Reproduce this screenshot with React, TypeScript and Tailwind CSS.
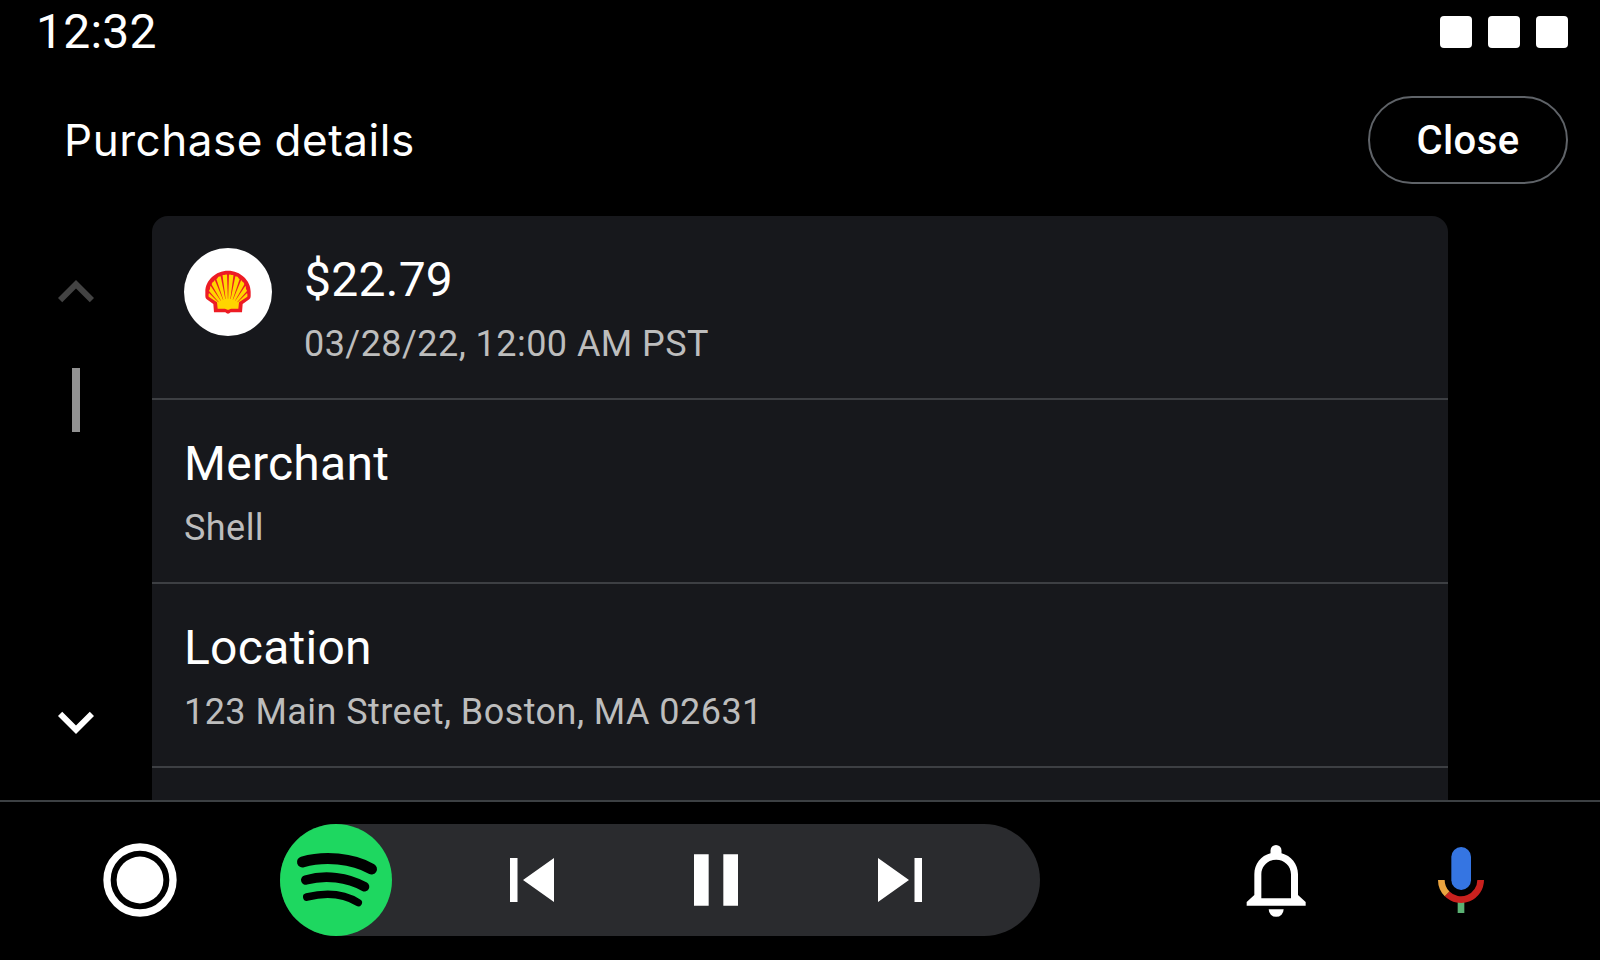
import type { ReactNode } from "react";

function ShellLogo() {
  return (
    <svg width="46" height="44" viewBox="0 0 138 132">
      <path
        fill="#ed1c24"
        d="M69 2C32 2 1 31 1 65v14q0 6 4 9L25 102l2 25h34q4 4 8 4t8-4h34l2-25 20-14q4-3 4-9V65C137 31 106 2 69 2Z"
      />
      <path
        fill="#ffd500"
        d="M69 15q6-3 11 0q7-1 11 4q8 0 11 7q7 1 9 8q7 3 8 11q5 5 4 12q5 6 3 11q2 6 1 12L102 97l-2 19H79q-4 0-5 2q-5 3-10 0q-1-2-5-2H38l-2-19L11 80q-1-6 1-12q-2-5 3-11q-1-7 4-12q1-8 8-11q2-7 9-8q3-7 11-7q4-5 11-4q5-3 11 0Z"
      />
      <g fill="#ed1c24">
        <path d="M66 12h6l-2.500 74h-1Z" />
        <path d="M46 14l6-2 10 75h-1Z" />
        <path d="M92 14l-6-2-10 75h1Z" />
        <path d="M27 24l5-3 23 68-1 .5Z" />
        <path d="M111 24l-5-3-23 68 1 .5Z" />
        <path d="M13 42l4-4 31 54-1 .5Z" />
        <path d="M125 42l-4-4-31 54 1 .5Z" />
        <path d="M5 62l2-5 34 39-1 .5Z" />
        <path d="M133 62l-2-5-34 39 1 .5Z" />
      </g>
    </svg>
  );
}

function SpotifyLogo() {
  return (
    <svg className="size-28" viewBox="0 0 24 24">
      <circle cx="12" cy="12" r="12" fill="#1ed760" />
      <g fill="none" stroke="#000" strokeLinecap="round">
        <path strokeWidth="2.36" d="M4.820 8.150C9.500 6.800 15.500 7.300 19.600 9.640" />
        <path strokeWidth="2.040" d="M5.520 12C9.700 10.800 14.500 11.400 18.120 13.450" />
        <path strokeWidth="1.620" d="M5.740 15.650C9.600 14.700 13.500 14.800 16.760 16.850" />
      </g>
    </svg>
  );
}

function PreviousIcon() {
  return (
    <svg className="size-11" viewBox="0 0 44 44" fill="#fff">
      <path d="M0 0h7.5v44H0zM44 0v44L13 22z" />
    </svg>
  );
}

function PauseIcon() {
  return (
    <svg className="h-[52px] w-11" viewBox="0 0 44 52" fill="#fff">
      <path d="M0 .33h14.67v51.34H0zM29.33 .33H44v51.34H29.33z" />
    </svg>
  );
}

function NextIcon() {
  return (
    <svg className="size-11" viewBox="0 0 44 44" fill="#fff">
      <path d="M36.5 0H44v44h-7.5zM0 0v44l31-22z" />
    </svg>
  );
}

function HomeIcon() {
  return (
    <svg className="size-20" viewBox="0 0 80 80">
      <circle cx="40" cy="40" r="33" fill="none" stroke="#fff" strokeWidth="7.33" />
      <circle cx="40" cy="40" r="23.4" fill="#fff" />
    </svg>
  );
}

function BellIcon() {
  return (
    <svg width="60" height="74" viewBox="78 72 180 222" fill="#fff">
      <path
        fillRule="evenodd"
        d="M151.500 91.500a16.500 16.500 0 0 1 33 0V100C213 107 234 132 234 163V225L257 246V257.500H80V246L103 225V163C103 132 123 107 151.500 100ZM124 235H213V163C213 138 193 119 168.500 119S124 138 124 163Z"
      />
      <path d="M146 268H191A22.500 22.500 0 0 1 146 268Z" />
    </svg>
  );
}

function MicIcon() {
  return (
    <svg width="46" height="66" viewBox="0 0 138 198">
      <rect x="40" y="0" width="59" height="129" rx="29.500" fill="#3575e2" />
      <path d="M59 160h20v38H59z" fill="#5bb173" />
      <path d="M128 99A59 59 0 0 1 27.300 140.700" fill="none" stroke="#c9211e" strokeWidth="20" />
      <path d="M10 99A59 59 0 0 0 27.300 140.700" fill="none" stroke="#eaa440" strokeWidth="20" />
    </svg>
  );
}

function Chevron({ up = false }: { up?: boolean }) {
  return (
    <svg className="size-[72px]" viewBox="0 0 24 24" fill={up ? "#434343" : "#fff"}>
      {up ? (
        <path d="M12 8l-6 6 1.410 1.410L12 10.830l4.590 4.580L18 14z" />
      ) : (
        <path d="M16.590 8.590L12 13.170 7.410 8.590 6 10l6 6 6-6z" />
      )}
    </svg>
  );
}

function Row({ title, detail, icon }: { title: string; detail: string; icon?: ReactNode }) {
  return (
    <div className="flex h-[184px] shrink-0 gap-8 border-b-2 border-[#3d3f43] px-8">
      {icon && (
        <div className="mt-8 flex size-[88px] items-center justify-center rounded-full bg-white">{icon}</div>
      )}
      <div className="flex flex-col gap-3.5 pt-9">
        <div className="text-[48px] leading-[56px] tracking-[0.26px] text-white">{title}</div>
        <div className="text-[36px] leading-[44px] tracking-[0.45px] text-[#bdbdbd]">{detail}</div>
      </div>
    </div>
  );
}

export default function App() {
  return (
    <div className="flex h-[960px] w-[1600px] flex-col overflow-hidden bg-black font-[Roboto,sans-serif] text-white">
      <div className="flex h-16 shrink-0 items-center justify-between pr-8 pl-9">
        <span className="text-[48px] leading-[56px] tracking-[0.24px]">12:32</span>
        <div className="flex gap-4">
          <div className="size-8 rounded-[4px] bg-white" />
          <div className="size-8 rounded-[4px] bg-white" />
          <div className="size-8 rounded-[4px] bg-white" />
        </div>
      </div>

      <div className="flex h-[152px] shrink-0 items-center justify-between pr-8 pl-16">
        <h1 className="font-[Inter,sans-serif] text-[44px] leading-[56px] tracking-[0.53px] [word-spacing:-1.3px]">
          Purchase details
        </h1>
        <button className="h-[88px] w-[200px] rounded-full border-2 border-[#5f6368] pt-0.5 text-[40px] leading-[48px] font-medium tracking-[0.4px]">
          Close
        </button>
      </div>

      <div className="flex h-[584px] shrink-0">
        <div className="flex w-[152px] flex-col items-center pt-10 pb-[42px]">
          <Chevron up />
          <div className="mt-10 h-16 w-2 bg-[#929292]" />
          <div className="mt-auto">
            <Chevron />
          </div>
        </div>
        <div className="flex w-[1296px] flex-col overflow-hidden rounded-t-2xl bg-[#17181c]">
          <Row title="$22.79" detail="03/28/22, 12:00 AM PST" icon={<ShellLogo />} />
          <Row title="Merchant" detail="Shell" />
          <Row title="Location" detail="123 Main Street, Boston, MA 02631" />
        </div>
      </div>

      <div className="flex h-40 shrink-0 items-center border-t-2 border-[#3c4043] pb-0.5 pl-[100px]">
        <HomeIcon />
        <div className="ml-[100px] flex h-28 w-[760px] items-center rounded-full bg-[#2a2b2e]">
          <SpotifyLogo />
          <div className="ml-[118px] flex items-center gap-[140px]">
            <PreviousIcon />
            <PauseIcon />
            <NextIcon />
          </div>
        </div>
        <div className="mt-0.5 ml-[206px]">
          <BellIcon />
        </div>
        <div className="ml-[132px]">
          <MicIcon />
        </div>
      </div>
    </div>
  );
}
